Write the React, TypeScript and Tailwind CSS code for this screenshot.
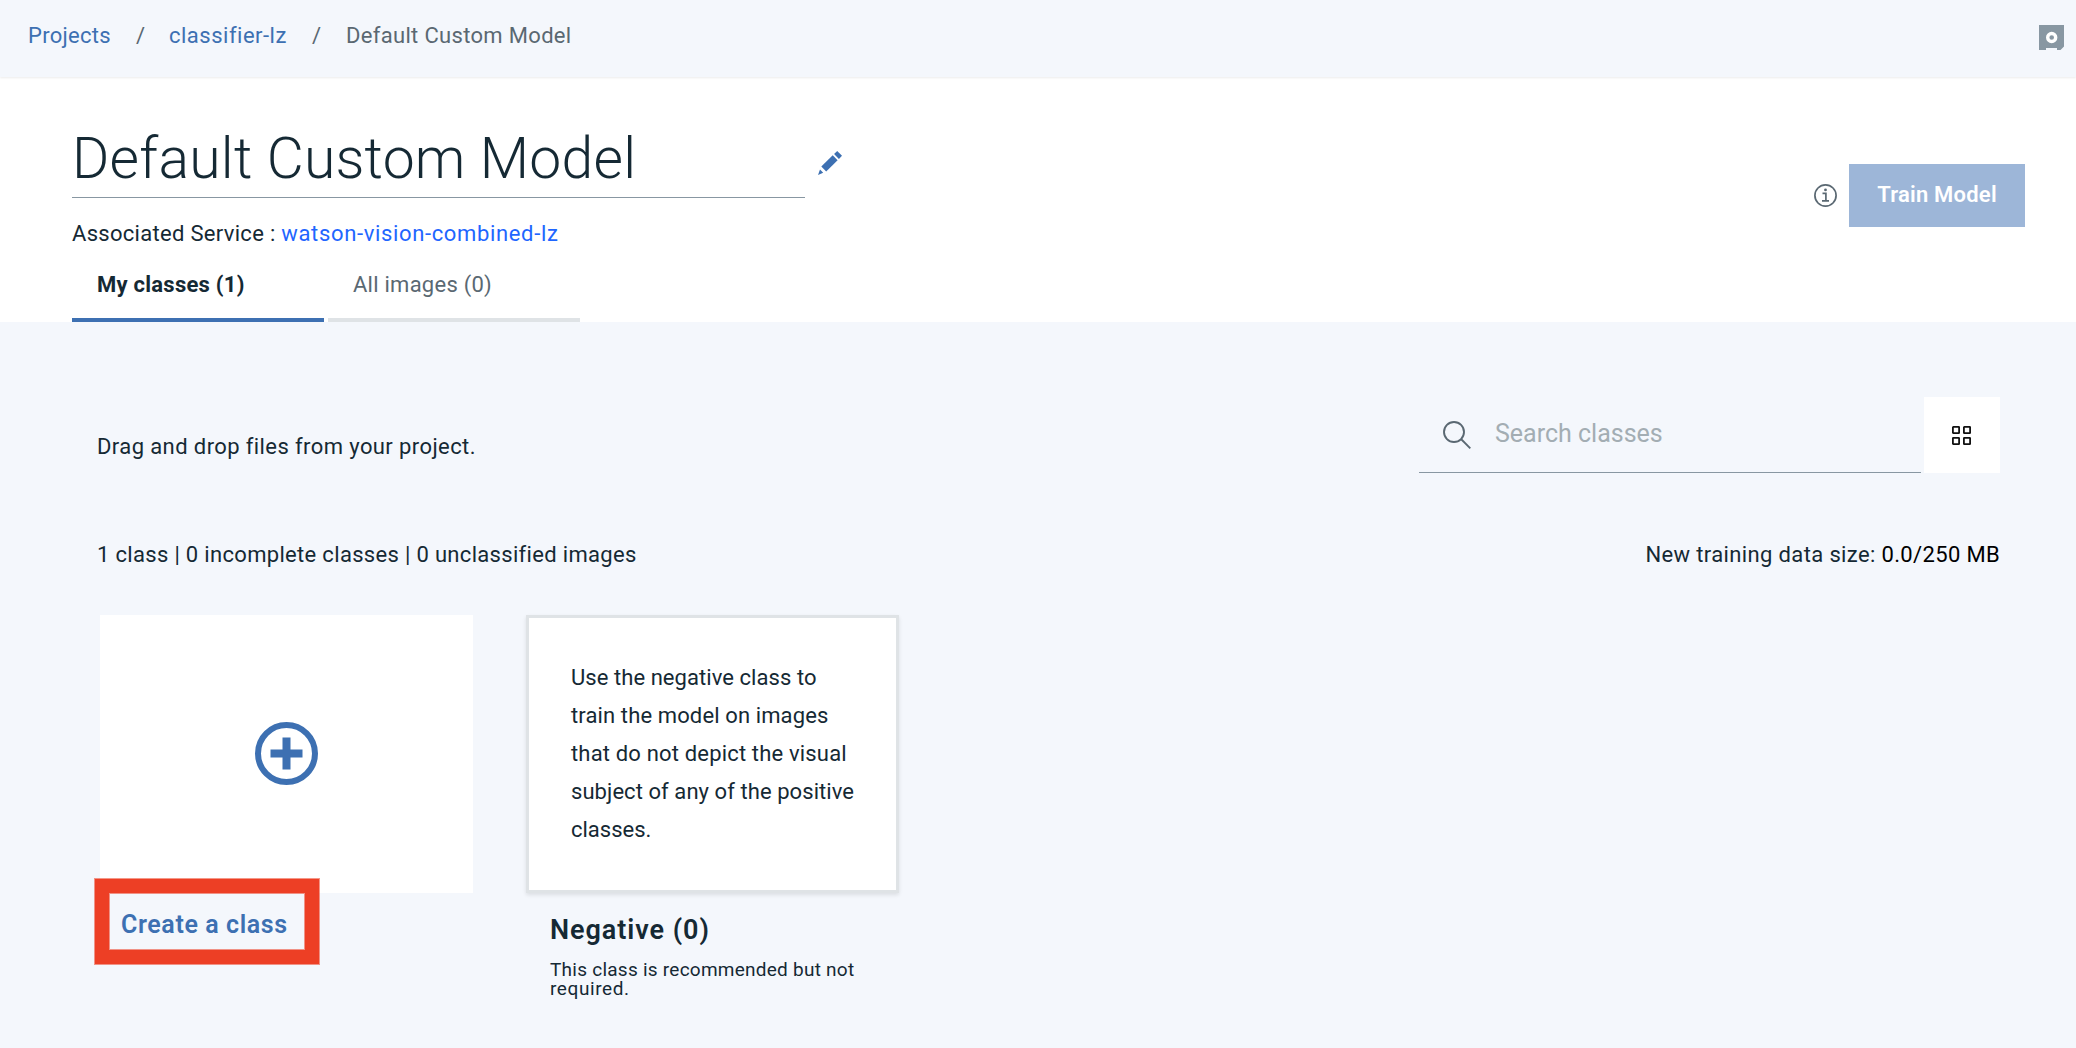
import React from "react";

function Header() {
  return (
    <header className="relative z-10 flex h-[77px] bg-[#f4f7fc] pt-5 pl-[28px] text-[22px] leading-8 text-[#5a6872] shadow-[0_1px_2px_rgba(0,0,0,0.08)]">
      <nav className="flex whitespace-nowrap">
        <a className="w-[108px] tracking-[0.27px] text-[#3d70b2]">Projects</a>
        <span className="w-[33px]">/</span>
        <a className="w-[143px] tracking-[0.5px] text-[#3d70b2]">classifier-lz</a>
        <span className="w-[34px]">/</span>
        <span className="tracking-[0.32px]">Default Custom Model</span>
      </nav>
      <svg className="mt-[5px] mr-3 ml-auto h-[25px] w-[25px]" viewBox="0 0 25 25" fill="none">
        <path d="M0 0H25V21.5L21.5 25H18V23H7V25H0Z" fill="#8897a2" />
        <circle cx="12.7" cy="12.5" r="4" stroke="#fff" strokeWidth="3.4" />
      </svg>
    </header>
  );
}

function Hero() {
  return (
    <section className="flex h-[245px] justify-between bg-white pr-[51px] pl-[72px]">
      <div className="flex flex-col">
        <div className="mt-[51px] flex">
          <h1 className="h-[70px] w-[733px] border-b border-[#8897a2] pt-px text-[57px] leading-[60px] font-light tracking-[0.25px]">
            Default Custom Model
          </h1>
          <svg className="mt-[23px] ml-[13px] h-6 w-6" viewBox="0 0 24 24" fill="#3d70b2">
            <path d="M19.2 0L24 4.8L20.9 7.9L16.1 3.1Z" />
            <path d="M14.7 4.3L19.6 9.2L8.2 20.4L3.3 15.5Z" />
            <path d="M2 18.6L5.2 21.8L0 24Z" />
          </svg>
        </div>
        <p className="mt-5 text-[22px] leading-8 whitespace-nowrap tracking-[0.3px]">
          Associated Service : <a className="tracking-[0.65px] text-[#1f66ff]">watson-vision-combined-lz</a>
        </p>
        <div className="mt-auto flex gap-1 text-[22px] leading-8">
          <div className="h-[53px] w-[252px] border-b-4 border-[#3d70b2] pl-[25px] font-bold tracking-[0.25px]">
            My classes (1)
          </div>
          <div className="h-[53px] w-[252px] border-b-4 border-[#dfe3e6] pl-[25px] tracking-[0.25px] text-[#5a6872]">
            All images (0)
          </div>
        </div>
      </div>
      <div className="mt-[87px] flex h-[63px] items-center gap-3">
        <svg className="h-[23px] w-[23px]" viewBox="0 0 23 23" fill="none" stroke="#5a6872">
          <circle cx="11.5" cy="11.5" r="10.6" strokeWidth="1.7" />
          <path d="M8.5 9.4H11.9V16.8M8 16.9H15" strokeWidth="1.7" />
          <circle cx="11.5" cy="5.9" r="1.4" fill="#5a6872" stroke="none" />
        </svg>
        <button className="h-[63px] w-44 bg-[#9db6d8] pb-[3px] text-[22px] font-semibold tracking-[0.22px] text-white">
          Train Model
        </button>
      </div>
    </section>
  );
}

function Toolbar() {
  return (
    <div className="flex justify-between">
      <p className="mt-[34px] text-[22px] leading-8 tracking-[0.4px]">Drag and drop files from your project.</p>
      <div className="flex gap-[3px]">
        <div className="flex h-[76px] w-[502px] items-center gap-6 border-b border-[#8897a2] pl-6">
          <svg className="h-7 w-7" viewBox="0 0 28 28" fill="none" stroke="#5a6872" strokeWidth="1.9">
            <circle cx="11" cy="11" r="10" />
            <path d="M18 18L27.3 27.3" />
          </svg>
          <span className="pb-[2px] text-[25px] text-[#a3adb3]">Search classes</span>
        </div>
        <button className="flex h-[76px] w-[76px] items-center justify-center bg-white pr-px">
          <svg className="h-[19px] w-[19px]" viewBox="0 0 19 19" fill="none" stroke="#111" strokeWidth="1.8">
            <rect x="0.9" y="0.9" width="6.2" height="6.2" rx="0.4" />
            <rect x="11.9" y="0.9" width="6.2" height="6.2" rx="0.4" />
            <rect x="0.9" y="11.9" width="6.2" height="6.2" rx="0.4" />
            <rect x="11.9" y="11.9" width="6.2" height="6.2" rx="0.4" />
          </svg>
        </button>
      </div>
    </div>
  );
}

function CreateCard() {
  return (
    <div className="w-[373px]">
      <div className="flex h-[278px] items-center justify-center bg-white pb-px">
        <svg className="h-[63px] w-[63px]" viewBox="0 0 63 63" fill="none" stroke="#3d70b2">
          <circle cx="31.5" cy="31.5" r="28.5" strokeWidth="6" />
          <path d="M15.5 31.5H47.5M31.5 15.5V47.5" strokeWidth="8" />
        </svg>
      </div>
      <div className="relative pt-4 pl-[21px] text-[25px] leading-8 font-semibold tracking-[0.6px] text-[#3d70b2]">
        Create a class
        <div className="absolute -top-[14px] -left-[5px] h-[85px] w-[224px] border-[14px] border-[#ed3f25] shadow-[0_0_0_1px_rgba(237,63,37,0.55),inset_0_0_0_1px_rgba(237,63,37,0.55)]" />
      </div>
    </div>
  );
}

function NegativeCard() {
  return (
    <div className="w-[373px]">
      <div className="h-[278px] border-[3px] border-[#dfe3e6] bg-white pt-[41px] pl-[42px] text-[22px] leading-[38px] whitespace-nowrap shadow-[0_2px_4px_rgba(0,0,0,0.1)]">
        <span className="block tracking-[0.06px]">Use the negative class to</span>
        <span className="block tracking-[0.12px]">train the model on images</span>
        <span className="block tracking-[0.17px]">that do not depict the visual</span>
        <span className="block tracking-[0.07px]">subject of any of the positive</span>
        <span className="block">classes.</span>
      </div>
      <div className="pl-6">
        <h2 className="pt-5 text-[27px] leading-[34px] font-semibold tracking-[0.95px]">Negative (0)</h2>
        <p className="mt-[13px] w-[320px] text-[19px] leading-[19px] tracking-[0.25px]">
          This class is recommended but not <span className="tracking-[0.6px]">required.</span>
        </p>
      </div>
    </div>
  );
}

export default function App() {
  return (
    <div className="h-[1048px] w-[2076px] overflow-hidden bg-[#f4f7fc] font-['Roboto',sans-serif] text-[#152934]">
      <Header />
      <Hero />
      <main className="pt-[75px] pr-[76px] pl-[97px]">
        <Toolbar />
        <div className="mt-[66px] flex justify-between text-[22px] leading-8">
          <p className="tracking-[0.32px]">1 class | 0 incomplete classes | 0 unclassified images</p>
          <p className="tracking-[0.37px]">
            New training data size: <span className="font-[450] tracking-[0.34px] text-black">0.0/250 MB</span>
          </p>
        </div>
        <div className="mt-11 flex gap-[53px] pl-[3px]">
          <CreateCard />
          <NegativeCard />
        </div>
      </main>
    </div>
  );
}
